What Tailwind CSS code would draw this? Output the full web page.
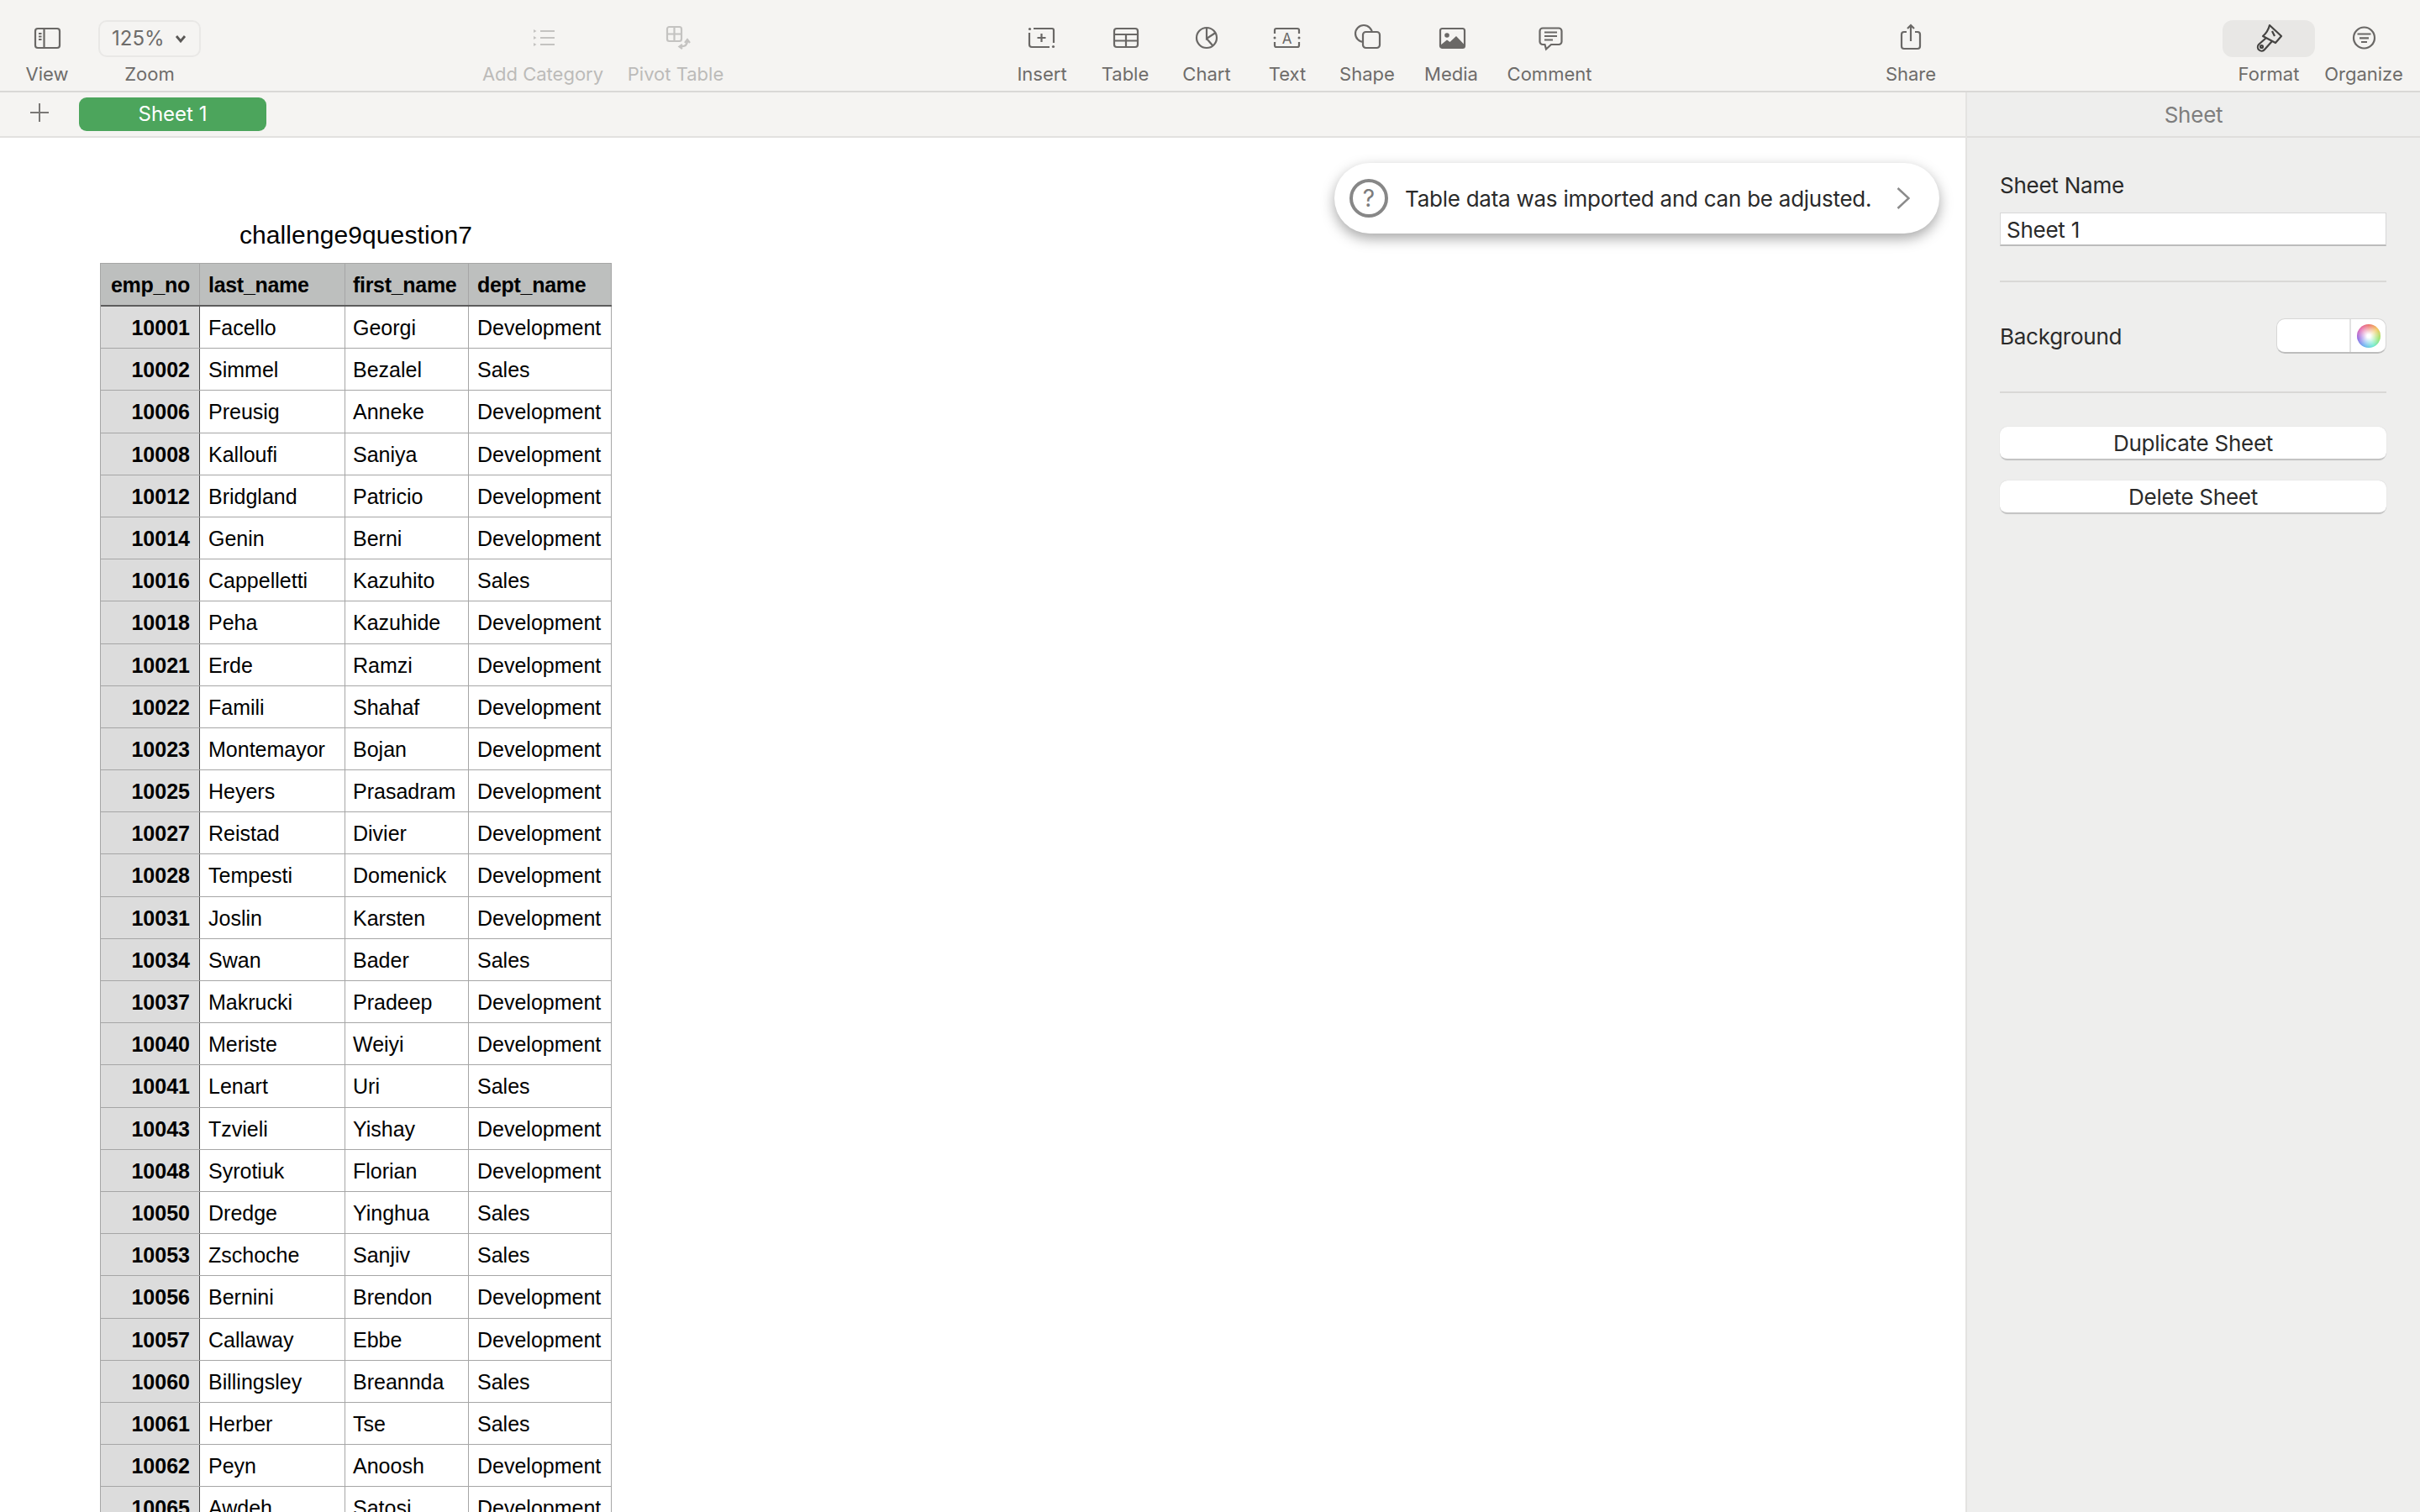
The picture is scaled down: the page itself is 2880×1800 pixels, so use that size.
<!DOCTYPE html>
<html lang="en">
<head>
<meta charset="UTF-8">
<title>Numbers - challenge9question7</title>
<script src="https://cdn.jsdelivr.net/npm/@tailwindcss/browser@4"></script>
</head>
<body class="w-[2880px] h-[1800px] overflow-hidden bg-white font-['Inter',sans-serif] text-[#2a2a2a]">

<!-- toolbar -->
<header class="flex h-[110px] bg-[#f5f4f2] border-b-2 border-[#d9d8d6] pl-[21px] text-[22px] leading-[26px] text-[#6e6c6a]">
  <div class="w-[70px] flex flex-col items-center pt-6">
    <svg class="w-11 h-11" viewBox="0 0 44 44" fill="none" stroke="#6a6866" stroke-width="2.2"><rect x="8" y="10" width="29" height="23" rx="3"/><path d="M18.5 10V33"/><path d="M12 16h3.5M12 19.5h3.5M12 23h3.5" stroke-width="1.8"/></svg>
    <span class="mt-[7px]">View</span>
  </div>
  <div class="w-[122px] ml-[26px] flex flex-col items-center pt-6">
    <div class="w-full h-11 flex items-center pl-[14px] gap-[12px] border-2 border-[#e9e8e6] rounded-[10px] text-[24px]">125%
      <svg class="w-[14px] h-[10px]" viewBox="0 0 14 10" fill="none" stroke="#5a5856" stroke-width="2.8"><path d="M2 2l5 6 5-6"/></svg>
    </div>
    <span class="mt-[7px]">Zoom</span>
  </div>
  <div class="w-[150px] ml-[332px] flex flex-col items-center pt-6 text-[#bcbbb9]">
    <svg class="w-11 h-11" viewBox="0 0 44 44" fill="none" stroke="#c4c3c1" stroke-width="2.2"><path d="M19 13H36M19 21H36M19 29H36"/><path d="M11 11l3.5 2-3.5 2zM11 19l3.5 2-3.5 2zM11 27l3.5 2-3.5 2z" fill="#c4c3c1" stroke="none"/></svg>
    <span class="mt-[7px]">Add Category</span>
  </div>
  <div class="w-[130px] ml-[18px] flex flex-col items-center pt-6 text-[#bcbbb9]">
    <svg class="w-11 h-11" viewBox="0 0 44 44" fill="none" stroke="#c4c3c1" stroke-width="2.2"><rect x="12" y="8" width="17" height="17" rx="2.5"/><path d="M20.5 8V25M12 16.5H29"/><path d="M36 25q0 6.500-8 6.500"/><path d="M33 27l3-4 3 4M30 29l-3.500 2.500 3.500 2.500"/></svg>
    <span class="mt-[7px]">Pivot Table</span>
  </div>
  <div class="w-[70px] ml-[336px] flex flex-col items-center pt-6">
    <svg class="w-11 h-11" viewBox="0 0 44 44" fill="none" stroke="#6a6866" stroke-width="2.2"><path d="M12 10H34a2 2 0 0 1 2 2V27M31 32H10a3 3 0 0 1-3-3V15"/><path d="M21.500 16v10M16.500 21h10"/><circle cx="7.500" cy="10.500" r="1.600" fill="#6a6866" stroke="none"/><circle cx="35.500" cy="31.500" r="1.600" fill="#6a6866" stroke="none"/></svg>
    <span class="mt-[7px]">Insert</span>
  </div>
  <div class="w-[70px] ml-[29px] flex flex-col items-center pt-6">
    <svg class="w-11 h-11" viewBox="0 0 44 44" fill="none" stroke="#6a6866" stroke-width="2.2"><rect x="9" y="10" width="28" height="22" rx="3"/><path d="M9 17H37M9 24.500H37M23 17V32"/></svg>
    <span class="mt-[7px]">Table</span>
  </div>
  <div class="w-[70px] ml-[27px] flex flex-col items-center pt-6">
    <svg class="w-11 h-11" viewBox="0 0 44 44" fill="none" stroke="#6a6866" stroke-width="2.2"><circle cx="22" cy="21" r="12"/><path d="M22 9V22L32.500 15M22 22L29.500 30.500"/></svg>
    <span class="mt-[7px]">Chart</span>
  </div>
  <div class="w-[70px] ml-[26px] flex flex-col items-center pt-6">
    <svg class="w-11 h-11" viewBox="0 0 44 44" fill="none" stroke="#6a6866" stroke-width="2.2"><path d="M7 16V12a2 2 0 0 1 2-2H34a2 2 0 0 1 2 2V16M7 26V30a2 2 0 0 0 2 2H34a2 2 0 0 0 2-2V26"/><circle cx="7" cy="21" r="1.500" fill="#6a6866" stroke="none"/><circle cx="36" cy="21" r="1.500" fill="#6a6866" stroke="none"/><text x="21.500" y="27.500" text-anchor="middle" font-size="17" fill="#6a6866" stroke="none" font-family="Inter">A</text></svg>
    <span class="mt-[7px]">Text</span>
  </div>
  <div class="w-[70px] ml-[25px] flex flex-col items-center pt-6">
    <svg class="w-11 h-11" viewBox="0 0 44 44" fill="none" stroke="#6a6866" stroke-width="2.2"><circle cx="18" cy="16" r="10"/><rect x="17" y="14" width="20" height="19" rx="3.500" fill="#f5f4f2"/></svg>
    <span class="mt-[7px]">Shape</span>
  </div>
  <div class="w-[70px] ml-[30px] flex flex-col items-center pt-6">
    <svg class="w-11 h-11" viewBox="0 0 44 44" fill="none" stroke="#6a6866" stroke-width="2.2"><rect x="9" y="10" width="29" height="23" rx="2.500"/><circle cx="17" cy="18" r="2.800" fill="#6a6866" stroke="none"/><path d="M9 30L17 23.500L20.500 26L28 19L38 29.500V33H9z" fill="#6a6866" stroke="none"/></svg>
    <span class="mt-[7px]">Media</span>
  </div>
  <div class="w-[100px] ml-[32px] flex flex-col items-center pt-6">
    <svg class="w-11 h-11" viewBox="0 0 44 44" fill="none" stroke="#6a6866" stroke-width="2.2"><path d="M14 9.500H33a3.500 3.500 0 0 1 3.500 3.500V25.500a3.500 3.500 0 0 1-3.500 3.500H24L18 34.500L16.500 29H14a3.500 3.500 0 0 1-3.500-3.500V13a3.500 3.500 0 0 1 3.500-3.500z"/><path d="M16 14.500H31M16 19H31M16 23.500H26" stroke-width="1.800"/></svg>
    <span class="mt-[7px]">Comment</span>
  </div>
  <div class="w-[70px] ml-[345px] flex flex-col items-center pt-6">
    <svg class="w-11 h-11" viewBox="0 0 44 44" fill="none" stroke="#6a6866" stroke-width="2.2"><path d="M17 14H14a3 3 0 0 0-3 3V31a3 3 0 0 0 3 3H30a3 3 0 0 0 3-3V17a3 3 0 0 0-3-3H27"/><path d="M22 25V6M18 10L22 6L26 10"/></svg>
    <span class="mt-[7px]">Share</span>
  </div>
  <div class="w-[110px] ml-[336px] flex flex-col items-center pt-6">
    <div class="w-full h-11 flex justify-center bg-[#e8e7e5] rounded-[12px]">
      <svg class="w-11 h-11" viewBox="0 0 44 44" fill="none" stroke="#454442" stroke-width="2.2" stroke-linejoin="round"><path d="M23 6L37 19L30 27L15 19Q21 14 23 6z"/><path d="M19 21L10 29a4 4 0 0 0 7 6L26 25"/><circle cx="13.500" cy="31.500" r="1.500"/><path d="M26 13L29 19"/></svg>
    </div>
    <span class="mt-[7px]">Format</span>
  </div>
  <div class="w-[100px] ml-[8px] flex flex-col items-center pt-6">
    <svg class="w-11 h-11" viewBox="0 0 44 44" fill="none" stroke="#6a6866" stroke-width="2.2"><circle cx="22.500" cy="21" r="12.500"/><path d="M14.500 16.500H30.500M17 21.300H28M19 26H26"/></svg>
    <span class="mt-[7px]">Organize</span>
  </div>
</header>

<div class="flex h-[1690px]">
  <!-- sheet tabs and canvas -->
  <main class="relative flex-1 min-w-0 flex flex-col">
    <div class="h-[54px] shrink-0 flex items-start pt-[6px] bg-[#f5f4f2] border-b-2 border-[#e2e1df]">
      <svg class="w-6 h-6 ml-[35px] mt-[6px]" viewBox="0 0 24 24" stroke="#7a7876" stroke-width="2"><path d="M12 1V23M1 12H23"/></svg>
      <div class="w-[223px] h-10 ml-[35px] flex items-center justify-center rounded-[9px] bg-[#4ca55c] text-white text-[24px]">Sheet 1</div>
    </div>

    <div class="pl-[119px] pt-[98px] font-['Liberation_Sans',Arial,sans-serif] text-black">
      <div class="w-[609px] text-center text-[30px] leading-9 mb-[15px] tracking-[0.1px]">challenge9question7</div>
      <div class="w-[609px] border-l border-t border-[#a6a6a6] text-[25px] leading-[51px] [&>div]:grid-rows-[49.2px]">
        <div class="grid grid-cols-[118px_173px_147px_170px] h-[51px] bg-[#bdbfbe] border-b-2 border-[#5c5c5c] font-bold tracking-[-0.3px]">
          <div class="border-r border-[#a6a6a6] text-right pr-[11px]">emp_no</div><div class="border-r border-[#a6a6a6] pl-[10px]">last_name</div><div class="border-r border-[#a6a6a6] pl-[9px]">first_name</div><div class="border-r border-[#a6a6a6] pl-[10px]">dept_name</div>
        </div>
        <div class="grid grid-cols-[118px_173px_147px_170px] h-[50.2px] border-b border-[#a6a6a6]"><b class="bg-[#dcdcdc] border-r border-[#4a4a4a] text-right pr-[11px]">10001</b><div class="border-r border-[#a6a6a6] pl-[10px]">Facello</div><div class="border-r border-[#a6a6a6] pl-[9px]">Georgi</div><div class="border-r border-[#a6a6a6] pl-[10px]">Development</div></div>
        <div class="grid grid-cols-[118px_173px_147px_170px] h-[50.2px] border-b border-[#a6a6a6]"><b class="bg-[#dcdcdc] border-r border-[#4a4a4a] text-right pr-[11px]">10002</b><div class="border-r border-[#a6a6a6] pl-[10px]">Simmel</div><div class="border-r border-[#a6a6a6] pl-[9px]">Bezalel</div><div class="border-r border-[#a6a6a6] pl-[10px]">Sales</div></div>
        <div class="grid grid-cols-[118px_173px_147px_170px] h-[50.2px] border-b border-[#a6a6a6]"><b class="bg-[#dcdcdc] border-r border-[#4a4a4a] text-right pr-[11px]">10006</b><div class="border-r border-[#a6a6a6] pl-[10px]">Preusig</div><div class="border-r border-[#a6a6a6] pl-[9px]">Anneke</div><div class="border-r border-[#a6a6a6] pl-[10px]">Development</div></div>
        <div class="grid grid-cols-[118px_173px_147px_170px] h-[50.2px] border-b border-[#a6a6a6]"><b class="bg-[#dcdcdc] border-r border-[#4a4a4a] text-right pr-[11px]">10008</b><div class="border-r border-[#a6a6a6] pl-[10px]">Kalloufi</div><div class="border-r border-[#a6a6a6] pl-[9px]">Saniya</div><div class="border-r border-[#a6a6a6] pl-[10px]">Development</div></div>
        <div class="grid grid-cols-[118px_173px_147px_170px] h-[50.2px] border-b border-[#a6a6a6]"><b class="bg-[#dcdcdc] border-r border-[#4a4a4a] text-right pr-[11px]">10012</b><div class="border-r border-[#a6a6a6] pl-[10px]">Bridgland</div><div class="border-r border-[#a6a6a6] pl-[9px]">Patricio</div><div class="border-r border-[#a6a6a6] pl-[10px]">Development</div></div>
        <div class="grid grid-cols-[118px_173px_147px_170px] h-[50.2px] border-b border-[#a6a6a6]"><b class="bg-[#dcdcdc] border-r border-[#4a4a4a] text-right pr-[11px]">10014</b><div class="border-r border-[#a6a6a6] pl-[10px]">Genin</div><div class="border-r border-[#a6a6a6] pl-[9px]">Berni</div><div class="border-r border-[#a6a6a6] pl-[10px]">Development</div></div>
        <div class="grid grid-cols-[118px_173px_147px_170px] h-[50.2px] border-b border-[#a6a6a6]"><b class="bg-[#dcdcdc] border-r border-[#4a4a4a] text-right pr-[11px]">10016</b><div class="border-r border-[#a6a6a6] pl-[10px]">Cappelletti</div><div class="border-r border-[#a6a6a6] pl-[9px]">Kazuhito</div><div class="border-r border-[#a6a6a6] pl-[10px]">Sales</div></div>
        <div class="grid grid-cols-[118px_173px_147px_170px] h-[50.2px] border-b border-[#a6a6a6]"><b class="bg-[#dcdcdc] border-r border-[#4a4a4a] text-right pr-[11px]">10018</b><div class="border-r border-[#a6a6a6] pl-[10px]">Peha</div><div class="border-r border-[#a6a6a6] pl-[9px]">Kazuhide</div><div class="border-r border-[#a6a6a6] pl-[10px]">Development</div></div>
        <div class="grid grid-cols-[118px_173px_147px_170px] h-[50.2px] border-b border-[#a6a6a6]"><b class="bg-[#dcdcdc] border-r border-[#4a4a4a] text-right pr-[11px]">10021</b><div class="border-r border-[#a6a6a6] pl-[10px]">Erde</div><div class="border-r border-[#a6a6a6] pl-[9px]">Ramzi</div><div class="border-r border-[#a6a6a6] pl-[10px]">Development</div></div>
        <div class="grid grid-cols-[118px_173px_147px_170px] h-[50.2px] border-b border-[#a6a6a6]"><b class="bg-[#dcdcdc] border-r border-[#4a4a4a] text-right pr-[11px]">10022</b><div class="border-r border-[#a6a6a6] pl-[10px]">Famili</div><div class="border-r border-[#a6a6a6] pl-[9px]">Shahaf</div><div class="border-r border-[#a6a6a6] pl-[10px]">Development</div></div>
        <div class="grid grid-cols-[118px_173px_147px_170px] h-[50.2px] border-b border-[#a6a6a6]"><b class="bg-[#dcdcdc] border-r border-[#4a4a4a] text-right pr-[11px]">10023</b><div class="border-r border-[#a6a6a6] pl-[10px]">Montemayor</div><div class="border-r border-[#a6a6a6] pl-[9px]">Bojan</div><div class="border-r border-[#a6a6a6] pl-[10px]">Development</div></div>
        <div class="grid grid-cols-[118px_173px_147px_170px] h-[50.2px] border-b border-[#a6a6a6]"><b class="bg-[#dcdcdc] border-r border-[#4a4a4a] text-right pr-[11px]">10025</b><div class="border-r border-[#a6a6a6] pl-[10px]">Heyers</div><div class="border-r border-[#a6a6a6] pl-[9px]">Prasadram</div><div class="border-r border-[#a6a6a6] pl-[10px]">Development</div></div>
        <div class="grid grid-cols-[118px_173px_147px_170px] h-[50.2px] border-b border-[#a6a6a6]"><b class="bg-[#dcdcdc] border-r border-[#4a4a4a] text-right pr-[11px]">10027</b><div class="border-r border-[#a6a6a6] pl-[10px]">Reistad</div><div class="border-r border-[#a6a6a6] pl-[9px]">Divier</div><div class="border-r border-[#a6a6a6] pl-[10px]">Development</div></div>
        <div class="grid grid-cols-[118px_173px_147px_170px] h-[50.2px] border-b border-[#a6a6a6]"><b class="bg-[#dcdcdc] border-r border-[#4a4a4a] text-right pr-[11px]">10028</b><div class="border-r border-[#a6a6a6] pl-[10px]">Tempesti</div><div class="border-r border-[#a6a6a6] pl-[9px]">Domenick</div><div class="border-r border-[#a6a6a6] pl-[10px]">Development</div></div>
        <div class="grid grid-cols-[118px_173px_147px_170px] h-[50.2px] border-b border-[#a6a6a6]"><b class="bg-[#dcdcdc] border-r border-[#4a4a4a] text-right pr-[11px]">10031</b><div class="border-r border-[#a6a6a6] pl-[10px]">Joslin</div><div class="border-r border-[#a6a6a6] pl-[9px]">Karsten</div><div class="border-r border-[#a6a6a6] pl-[10px]">Development</div></div>
        <div class="grid grid-cols-[118px_173px_147px_170px] h-[50.2px] border-b border-[#a6a6a6]"><b class="bg-[#dcdcdc] border-r border-[#4a4a4a] text-right pr-[11px]">10034</b><div class="border-r border-[#a6a6a6] pl-[10px]">Swan</div><div class="border-r border-[#a6a6a6] pl-[9px]">Bader</div><div class="border-r border-[#a6a6a6] pl-[10px]">Sales</div></div>
        <div class="grid grid-cols-[118px_173px_147px_170px] h-[50.2px] border-b border-[#a6a6a6]"><b class="bg-[#dcdcdc] border-r border-[#4a4a4a] text-right pr-[11px]">10037</b><div class="border-r border-[#a6a6a6] pl-[10px]">Makrucki</div><div class="border-r border-[#a6a6a6] pl-[9px]">Pradeep</div><div class="border-r border-[#a6a6a6] pl-[10px]">Development</div></div>
        <div class="grid grid-cols-[118px_173px_147px_170px] h-[50.2px] border-b border-[#a6a6a6]"><b class="bg-[#dcdcdc] border-r border-[#4a4a4a] text-right pr-[11px]">10040</b><div class="border-r border-[#a6a6a6] pl-[10px]">Meriste</div><div class="border-r border-[#a6a6a6] pl-[9px]">Weiyi</div><div class="border-r border-[#a6a6a6] pl-[10px]">Development</div></div>
        <div class="grid grid-cols-[118px_173px_147px_170px] h-[50.2px] border-b border-[#a6a6a6]"><b class="bg-[#dcdcdc] border-r border-[#4a4a4a] text-right pr-[11px]">10041</b><div class="border-r border-[#a6a6a6] pl-[10px]">Lenart</div><div class="border-r border-[#a6a6a6] pl-[9px]">Uri</div><div class="border-r border-[#a6a6a6] pl-[10px]">Sales</div></div>
        <div class="grid grid-cols-[118px_173px_147px_170px] h-[50.2px] border-b border-[#a6a6a6]"><b class="bg-[#dcdcdc] border-r border-[#4a4a4a] text-right pr-[11px]">10043</b><div class="border-r border-[#a6a6a6] pl-[10px]">Tzvieli</div><div class="border-r border-[#a6a6a6] pl-[9px]">Yishay</div><div class="border-r border-[#a6a6a6] pl-[10px]">Development</div></div>
        <div class="grid grid-cols-[118px_173px_147px_170px] h-[50.2px] border-b border-[#a6a6a6]"><b class="bg-[#dcdcdc] border-r border-[#4a4a4a] text-right pr-[11px]">10048</b><div class="border-r border-[#a6a6a6] pl-[10px]">Syrotiuk</div><div class="border-r border-[#a6a6a6] pl-[9px]">Florian</div><div class="border-r border-[#a6a6a6] pl-[10px]">Development</div></div>
        <div class="grid grid-cols-[118px_173px_147px_170px] h-[50.2px] border-b border-[#a6a6a6]"><b class="bg-[#dcdcdc] border-r border-[#4a4a4a] text-right pr-[11px]">10050</b><div class="border-r border-[#a6a6a6] pl-[10px]">Dredge</div><div class="border-r border-[#a6a6a6] pl-[9px]">Yinghua</div><div class="border-r border-[#a6a6a6] pl-[10px]">Sales</div></div>
        <div class="grid grid-cols-[118px_173px_147px_170px] h-[50.2px] border-b border-[#a6a6a6]"><b class="bg-[#dcdcdc] border-r border-[#4a4a4a] text-right pr-[11px]">10053</b><div class="border-r border-[#a6a6a6] pl-[10px]">Zschoche</div><div class="border-r border-[#a6a6a6] pl-[9px]">Sanjiv</div><div class="border-r border-[#a6a6a6] pl-[10px]">Sales</div></div>
        <div class="grid grid-cols-[118px_173px_147px_170px] h-[50.2px] border-b border-[#a6a6a6]"><b class="bg-[#dcdcdc] border-r border-[#4a4a4a] text-right pr-[11px]">10056</b><div class="border-r border-[#a6a6a6] pl-[10px]">Bernini</div><div class="border-r border-[#a6a6a6] pl-[9px]">Brendon</div><div class="border-r border-[#a6a6a6] pl-[10px]">Development</div></div>
        <div class="grid grid-cols-[118px_173px_147px_170px] h-[50.2px] border-b border-[#a6a6a6]"><b class="bg-[#dcdcdc] border-r border-[#4a4a4a] text-right pr-[11px]">10057</b><div class="border-r border-[#a6a6a6] pl-[10px]">Callaway</div><div class="border-r border-[#a6a6a6] pl-[9px]">Ebbe</div><div class="border-r border-[#a6a6a6] pl-[10px]">Development</div></div>
        <div class="grid grid-cols-[118px_173px_147px_170px] h-[50.2px] border-b border-[#a6a6a6]"><b class="bg-[#dcdcdc] border-r border-[#4a4a4a] text-right pr-[11px]">10060</b><div class="border-r border-[#a6a6a6] pl-[10px]">Billingsley</div><div class="border-r border-[#a6a6a6] pl-[9px]">Breannda</div><div class="border-r border-[#a6a6a6] pl-[10px]">Sales</div></div>
        <div class="grid grid-cols-[118px_173px_147px_170px] h-[50.2px] border-b border-[#a6a6a6]"><b class="bg-[#dcdcdc] border-r border-[#4a4a4a] text-right pr-[11px]">10061</b><div class="border-r border-[#a6a6a6] pl-[10px]">Herber</div><div class="border-r border-[#a6a6a6] pl-[9px]">Tse</div><div class="border-r border-[#a6a6a6] pl-[10px]">Sales</div></div>
        <div class="grid grid-cols-[118px_173px_147px_170px] h-[50.2px] border-b border-[#a6a6a6]"><b class="bg-[#dcdcdc] border-r border-[#4a4a4a] text-right pr-[11px]">10062</b><div class="border-r border-[#a6a6a6] pl-[10px]">Peyn</div><div class="border-r border-[#a6a6a6] pl-[9px]">Anoosh</div><div class="border-r border-[#a6a6a6] pl-[10px]">Development</div></div>
        <div class="grid grid-cols-[118px_173px_147px_170px] h-[50.2px] border-b border-[#a6a6a6]"><b class="bg-[#dcdcdc] border-r border-[#4a4a4a] text-right pr-[11px]">10065</b><div class="border-r border-[#a6a6a6] pl-[10px]">Awdeh</div><div class="border-r border-[#a6a6a6] pl-[9px]">Satosi</div><div class="border-r border-[#a6a6a6] pl-[10px]">Development</div></div>
      </div>
    </div>

    <!-- import hint, floats over the canvas -->
    <div class="absolute left-[1588px] top-[84px] w-[720px] h-[84px] flex items-center pl-[18px] rounded-[42px] bg-white shadow-[0_6px_16px_rgba(0,0,0,0.35)]">
      <div class="w-[46px] h-[46px] flex items-center justify-center rounded-full border-4 border-[#878787] text-[28px] text-[#7c7c7c]">?</div>
      <span class="ml-[20px] text-[26px] tracking-[-0.25px] text-[#2a2a2a] whitespace-nowrap">Table data was imported and can be adjusted.</span>
      <svg class="w-4 h-[26px] ml-auto mr-[35px]" viewBox="0 0 16 26" fill="none" stroke="#8b8b8b" stroke-width="2.500"><path d="M1.500 1L14.500 13L1.500 25"/></svg>
    </div>
  </main>

  <!-- format sidebar -->
  <aside class="w-[541px] shrink-0 bg-[#eeeeed] border-l-2 border-[#e4e3e1] text-[26px] tracking-[-0.25px]">
    <div class="h-[54px] flex items-center justify-center border-b-2 border-[#dfdedc] text-[#7e7e7e]">Sheet</div>
    <div class="pl-[39px] pr-[40px]">
      <div class="mt-[41px] leading-8">Sheet Name</div>
      <div class="mt-[16px] h-10 pl-[7px] pt-[2px] flex items-center bg-white border border-[#d8d8d8] border-b-2 border-b-[#bcbcbc]">Sheet 1</div>
      <div class="mt-[41px] h-[2px] bg-[#d9d8d6]"></div>
      <div class="mt-[43px] h-[42px] flex items-center justify-between">
        <span>Background</span>
        <div class="w-[131px] h-[42px] flex rounded-[10px] bg-white border border-[#d6d6d6] border-b-2 border-b-[#bdbdbd]">
          <div class="w-[88px] border-r-2 border-[#e2e2e2]"></div>
          <div class="flex-1 flex items-center justify-center">
            <div class="w-7 h-7 rounded-full bg-[conic-gradient(#e9635a,#f0c04a,#8fe05a,#5fe8c8,#5aa8f0,#8a5ae0,#e05aa8,#e9635a)]">
              <div class="w-7 h-7 rounded-full bg-[radial-gradient(circle,#ffffff_10%,transparent_75%)]"></div>
            </div>
          </div>
        </div>
      </div>
      <div class="mt-[45px] h-[2px] bg-[#d9d8d6]"></div>
      <button class="mt-[40px] w-full h-10 rounded-[9px] bg-white border-b-2 border-[#c4c4c4] shadow-[0_0_1px_rgba(0,0,0,0.2)]">Duplicate Sheet</button>
      <button class="mt-6 w-full h-10 rounded-[9px] bg-white border-b-2 border-[#c4c4c4] shadow-[0_0_1px_rgba(0,0,0,0.2)]">Delete Sheet</button>
    </div>
  </aside>
</div>
</body>
</html>
